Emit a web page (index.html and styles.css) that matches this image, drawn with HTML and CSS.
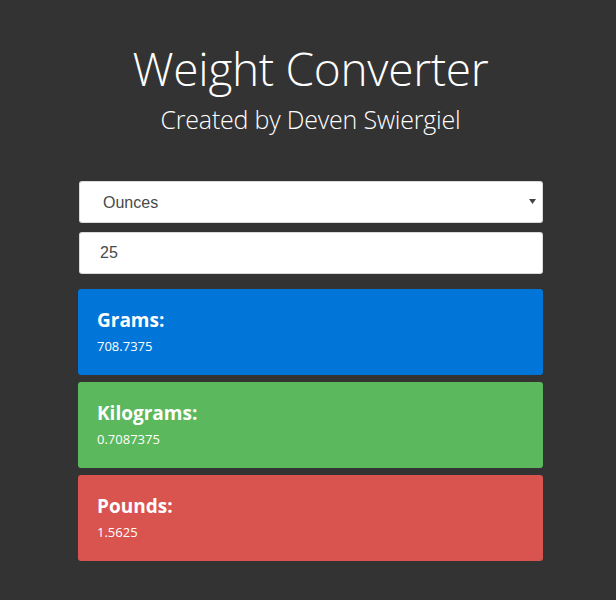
FILE: index.html
```html
<!DOCTYPE html>
<html>
<head>
<meta charset="utf-8">
<link rel="stylesheet" href="styles.css">
</head>
<body>
<div class="container">
  <header class="header">
    <h1 class="title">Weight Converter</h1>
    <p class="subtitle">Created by Deven Swiergiel</p>
  </header>
  <form class="form">
    <div class="select-wrap">
      <select class="field select">
        <option>Ounces</option>
      </select>
      <svg class="arrow" width="7" height="5" viewBox="0 0 7 5"><path d="M0 0H7L3.5 5Z" fill="#444"/></svg>
    </div>
    <input class="field input" type="text" value="25">
  </form>
  <div class="cards">
    <div class="card blue">
      <h4 class="card-title">Grams:</h4>
      <div class="card-value">708.7375</div>
    </div>
    <div class="card green">
      <h4 class="card-title">Kilograms:</h4>
      <div class="card-value">0.7087375</div>
    </div>
    <div class="card red">
      <h4 class="card-title">Pounds:</h4>
      <div class="card-value">1.5625</div>
    </div>
  </div>
</div>
</body>
</html>
```

FILE: styles.css
```css
html, body {
  margin: 0;
  padding: 0;
  background: #333333;
}
body {
  font-family: "Open Sans", "Noto Sans", sans-serif;
  color: #fff;
}
.container {
  width: 465px;
  margin-left: 78px;
  padding-top: 36px;
}
.header {
  text-align: center;
}
.title {
  margin: 0;
  font-weight: 300;
  font-size: 46px;
  line-height: 64px;
  letter-spacing: -0.3px;
}
.subtitle {
  margin: 0;
  font-weight: 300;
  font-size: 25px;
  line-height: 38px;
  letter-spacing: -0.2px;
}
.form {
  margin-top: 43px;
  display: flex;
  flex-direction: column;
  gap: 9px;
  padding-left: 1px;
}
.select-wrap {
  position: relative;
}
.field {
  display: block;
  box-sizing: border-box;
  width: 464px;
  height: 42px;
  border: 1px solid rgba(0,0,0,.15);
  border-radius: 3px;
  background: #fff;
  font-family: "Liberation Sans", Arial, sans-serif;
  font-size: 16px;
  color: #464a4c;
  outline: none;
  margin: 0;
}
.select {
  appearance: none;
  -webkit-appearance: none;
  padding: 0 0 0 23px;
}
.arrow {
  position: absolute;
  right: 7px;
  top: 18px;
}
.input {
  padding: 0 0 0 20px;
}
.cards {
  margin-top: 15px;
  display: flex;
  flex-direction: column;
  gap: 7px;
}
.card {
  height: 86px;
  box-sizing: border-box;
  border-radius: 3px;
  padding: 18px 19px 0;
}
.blue { background: #0275d8; }
.green { background: #5cb85c; }
.red { background: #d9534f; }
.card-title {
  margin: 0;
  font-size: 19px;
  font-weight: 700;
  line-height: 26px;
}
.card-value {
  margin-top: 4px;
  font-size: 13px;
  line-height: 18px;
}
```
